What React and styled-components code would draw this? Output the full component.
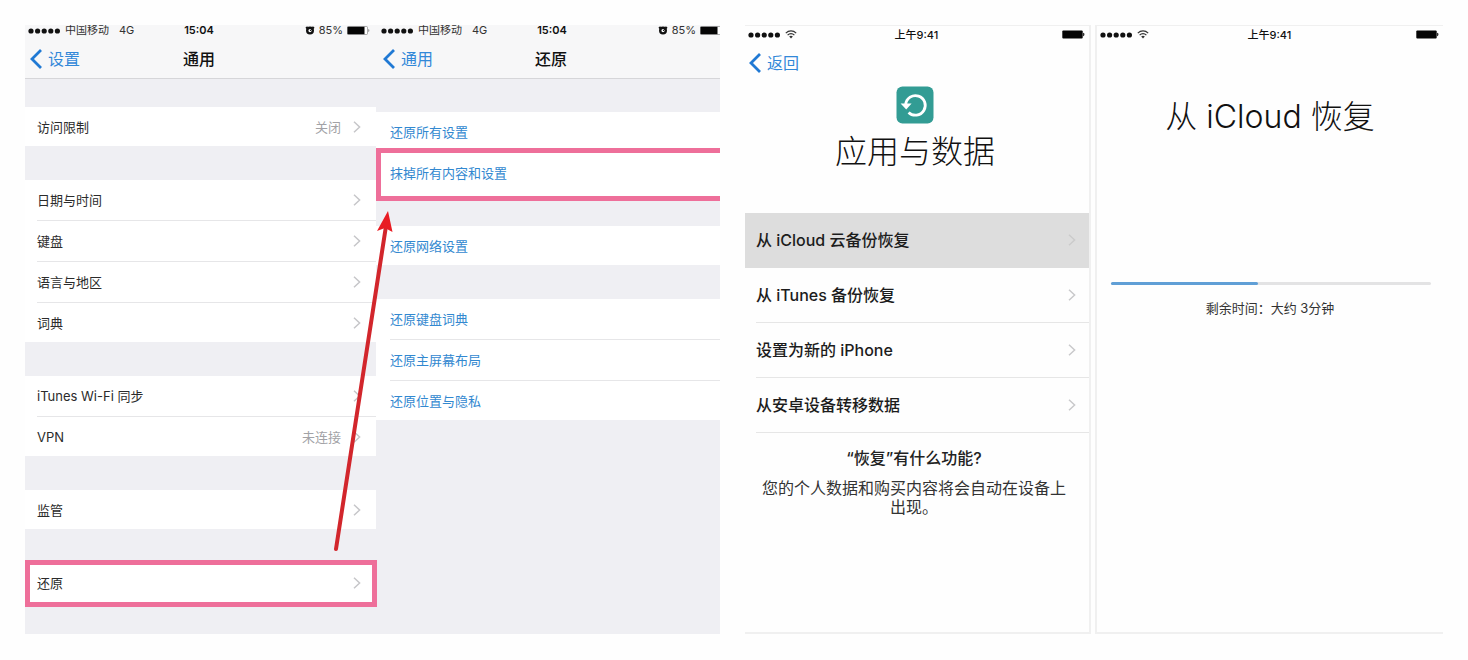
import React, { Fragment } from 'react';
import styled, { createGlobalStyle, css } from 'styled-components';

const GlobalStyle = createGlobalStyle`
    * {
        box-sizing: border-box;
    }
    body {
        margin: 0;
        background-color: #fefefe;
        color: #222;
        font-family: Inter, "Noto Sans CJK SC", sans-serif;
        font-size: 13px;
    }
    button {
        border: 0;
        padding: 0;
        background: none;
        color: inherit;
        font: inherit;
        text-align: left;
        cursor: pointer;
    }
    svg {
        display: block;
        flex: none;
    }
    h1, h2, p {
        margin: 0;
    }
`;

const Page = styled.main`
    display: grid;
    grid-template-columns: 695fr 698fr;
    gap: 25px;
    min-height: 100vh;
    padding: 25px 25px 26px;
`;

const Board = styled.section`
    position: relative;
    display: flex;
    gap: ${props => props.$gap || 0};
    overflow: hidden;
`;

/* iOS settings screens */

const SettingsPhone = styled.article`
    --shift: ${props => props.$shift || '0px'};
    flex: 0 0 calc(100% * 351 / 695);
    background-color: #efeff3;
`;

const SettingsHeader = styled.header`
    border-bottom: 1px solid #d6d6d9;
    background-color: #f7f7f8;
`;

const Bar = styled.div`
    display: grid;
    grid-template-columns: 1fr auto 1fr;
    align-items: center;
`;

const SettingsStatus = styled(Bar)`
    padding-left: calc(3px + var(--shift));
    padding-right: calc(6px - var(--shift));
    font-size: 11px;
    line-height: 11px;
    color: #333;
`;

const StatusGroup = styled.div`
    display: flex;
    align-items: center;
    gap: 4px;
    justify-content: ${props => props.$end ? 'flex-end' : 'flex-start'};
`;

const Carrier = styled.span`
    margin-right: 6px;
`;

const Clock = styled.time`
    font-size: 11px;
    font-weight: ${props => props.$bold ? 600 : 500};
    color: #111;
`;

const SettingsNav = styled(Bar)`
    height: 42px;
    padding: 4px 8px 0 calc(5px + var(--shift));
`;

const BackButton = styled.button`
    display: flex;
    align-items: center;
    gap: 6px;
    justify-self: start;
    color: #3288d8;
    font-size: 16px;
    line-height: 24px;
`;

const NavTitle = styled.h1`
    font-size: 16px;
    line-height: 24px;
    font-weight: 500;
    color: #111;
`;

const Groups = styled.div`
    display: flex;
    flex-direction: column;
    gap: 34px;
    padding-top: ${props => props.$top};
`;

const Group = styled.div`
    background-color: #fff;
`;

const highlight = css`
    z-index: 1;
    &::after {
        content: "";
        position: absolute;
        z-index: -1;
        inset: ${props => props.$mark};
        border: 5px solid #ee6f9a;
        background-color: #fff;
    }
`;

const Row = styled.button`
    position: relative;
    display: block;
    width: 100%;
    padding-left: calc(12px + var(--shift));
    color: ${props => props.$link ? '#3288d0' : '#2b2b2b'};
    ${props => props.$mark && highlight}
`;

const RowInner = styled.span`
    display: flex;
    align-items: center;
    gap: 12px;
    height: 41px;
    padding-right: 15px;
    border-bottom: 1px solid #e6e6e8;
    line-height: 20px;
    ${Row}:last-child > & {
        height: 39px;
        border-bottom: 0;
    }
`;

const RowLabel = styled.span`
    flex: 1;
`;

const RowValue = styled.span`
    color: #a2a2a6;
`;

const Arrow = styled.svg`
    position: absolute;
    z-index: 2;
    top: 185px;
    left: calc(100% * 305 / 695);
`;

/* setup assistant screens */

const SetupPhone = styled.article`
    flex: ${props => props.$grow} 1 0;
    border: solid #f0f0f0;
    border-width: ${props => props.$edges};
    background-color: #fefefe;
`;

const SetupStatus = styled(Bar)`
    height: 17px;
    padding: 0 4px 0 3px;
    line-height: 16px;
`;

const SetupNav = styled.nav`
    padding: 8px 4px 0;
`;

const Hero = styled.header`
    display: flex;
    flex-direction: column;
    align-items: center;
    gap: 4px;
    padding: 11px 4px 37px 0;
`;

const HeroTitle = styled.h1`
    padding-top: ${props => props.$top || 0};
    font-size: 32px;
    line-height: 48px;
    font-weight: 300;
    text-align: center;
    color: #111;
`;

const Option = styled.button`
    display: block;
    width: 100%;
    padding-left: 11px;
    background-color: ${props => props.$active ? '#dddddd' : 'transparent'};
    color: #1c1c1c;
`;

const OptionInner = styled.span`
    display: flex;
    align-items: center;
    justify-content: space-between;
    height: 55px;
    padding-right: 13px;
    border-bottom: 1px solid ${props => props.$active ? '#dddddd' : '#e6e6e6'};
    font-size: 16px;
    line-height: 24px;
    font-weight: 500;
`;

const Help = styled.section`
    padding: 13px 20px 0 14px;
    text-align: center;
`;

const HelpTitle = styled.h2`
    font-size: 16px;
    line-height: 24px;
    font-weight: 500;
`;

const HelpText = styled.p`
    padding-top: 9px;
    font-size: 16px;
    line-height: 19px;
    color: #333;
`;

const Progress = styled.progress`
    display: block;
    width: calc(100% - 26px);
    height: 3px;
    margin: 141px 12px 13px 14px;
    border: 0;
    appearance: none;
    &::-webkit-progress-bar {
        border-radius: 2px;
        background-color: #e3e3e4;
    }
    &::-webkit-progress-value {
        border-radius: 2px;
        background-color: #609fd6;
    }
`;

const Remaining = styled.label`
    display: block;
    text-align: center;
    line-height: 20px;
    color: #333;
`;

const Signal = () => (
    <svg width="33" height="6" viewBox="0 0 33 6" fill="#111">
        {[0, 1, 2, 3, 4].map(item => <circle key={item} cx={3 + item * 6.6} cy="3" r="2.6" />)}
    </svg>
);

const Wifi = () => (
    <svg width="12" height="9" viewBox="0 0 12 9" fill="none" stroke="#333" strokeWidth="1.2">
        <path d="M0.8 3.2C3.8 0.2 8.2 0.2 11.2 3.2" />
        <path d="M2.6 5.1C4.6 3.1 7.4 3.1 9.4 5.1" />
        <path d="M4.2 6.4C5.2 5.4 6.8 5.4 7.8 6.4L6 8.4Z" fill="#333" stroke="none" />
    </svg>
);

const Alarm = () => (
    <svg width="10" height="9" viewBox="0 0 10 9">
        <path d="M1 2.4L2.6 0.8M9 2.4L7.4 0.8" stroke="#111" strokeWidth="1.6" />
        <circle cx="5" cy="4.6" r="2.8" fill="#fff" stroke="#111" strokeWidth="2.4" />
        <path d="M5 5L6.8 3" stroke="#111" strokeWidth="1" />
    </svg>
);

const Battery = () => (
    <svg width="23" height="9" viewBox="0 0 23 9">
        <rect x="0.5" y="0.5" width="20" height="8" rx="1" fill="#fff" stroke="#777" strokeWidth="0.6" />
        <rect x="0.5" y="0.8" width="17" height="7.4" fill="#050505" />
        <path d="M21.4 3V6C22.6 5.8 22.6 3.2 21.4 3Z" fill="#777" />
    </svg>
);

const BatteryFull = () => (
    <svg width="23" height="9" viewBox="0 0 23 9" fill="#050505">
        <rect x="0.3" y="0.4" width="20.4" height="8.2" rx="1" />
        <path d="M21.2 2.8V6.2C22.8 6 22.8 3 21.2 2.8Z" />
    </svg>
);

const BackIcon = () => (
    <svg width="12" height="20" viewBox="0 0 12 20" fill="none" stroke="#2079d4" strokeWidth="2.8">
        <path d="M11 1L2 10L11 19" />
    </svg>
);

const Chevron = ({ color = '#c6c6c9' }) => (
    <svg width="8" height="12" viewBox="0 0 8 12" fill="none" stroke={color} strokeWidth="1.5">
        <path d="M1 0.8L6.6 6L1 11.2" />
    </svg>
);

const RestoreIcon = () => (
    <svg width="38" height="38" viewBox="0 0 38 38">
        <rect x="0.5" y="0.5" width="37" height="37" rx="6" fill="#329c94" />
        <path d="M9.7 18.5A9.8 9.8 0 1 1 12.6 26.4" fill="none" stroke="#fff" strokeWidth="2.8" />
        <path d="M4.6 17.4H15.6L10.2 23.4Z" fill="#fff" />
    </svg>
);

const SettingsTop = ({ back, title }) => (
    <SettingsHeader>
        <SettingsStatus>
            <StatusGroup>
                <Signal />
                <Carrier>中国移动</Carrier>
                <span>4G</span>
            </StatusGroup>
            <Clock $bold>15:04</Clock>
            <StatusGroup $end>
                <Alarm />
                <span>85%</span>
                <Battery />
            </StatusGroup>
        </SettingsStatus>
        <SettingsNav>
            <BackButton><BackIcon />{back}</BackButton>
            <NavTitle>{title}</NavTitle>
        </SettingsNav>
    </SettingsHeader>
);

const SettingsList = ({ groups, top, link }) => (
    <Groups $top={top}>
        {groups.map((group, index) => (
            <Group key={index}>
                {group.map(item => (
                    <Row key={item.label} $link={link} $mark={item.mark}>
                        <RowInner>
                            <RowLabel>{item.label}</RowLabel>
                            {item.value && <RowValue>{item.value}</RowValue>}
                            {!link && <Chevron />}
                        </RowInner>
                    </Row>
                ))}
            </Group>
        ))}
    </Groups>
);

const SetupTop = () => (
    <SetupStatus>
        <StatusGroup>
            <Signal />
            <Wifi />
        </StatusGroup>
        <Clock>上午9:41</Clock>
        <StatusGroup $end><BatteryFull /></StatusGroup>
    </SetupStatus>
);

const general = [
    [{ label: '访问限制', value: '关闭' }],
    [{ label: '日期与时间' }, { label: '键盘' }, { label: '语言与地区' }, { label: '词典' }],
    [{ label: 'iTunes Wi-Fi 同步' }, { label: 'VPN', value: '未连接' }],
    [{ label: '监管' }],
    [{ label: '还原', mark: '-3px -1px -5px 0' }],
];

const reset = [
    [{ label: '还原所有设置' }, { label: '抹掉所有内容和设置', mark: '-5px 0 -9px 0' }],
    [{ label: '还原网络设置' }],
    [{ label: '还原键盘词典' }, { label: '还原主屏幕布局' }, { label: '还原位置与隐私' }],
];

const options = ['从 iCloud 云备份恢复', '从 iTunes 备份恢复', '设置为新的 iPhone', '从安卓设备转移数据'];

const App = () => {
    return (
        <Fragment>
            <GlobalStyle />
            <Page lang="zh-CN">
                <Board>
                    <SettingsPhone>
                        <SettingsTop back="设置" title="通用" />
                        <SettingsList groups={general} top="28px" />
                    </SettingsPhone>
                    <SettingsPhone $shift="2px">
                        <SettingsTop back="通用" title="还原" />
                        <SettingsList groups={reset} top="33px" link />
                    </SettingsPhone>
                    <Arrow width="75" height="345" viewBox="0 0 75 345">
                        <path d="M6 339L56 16" stroke="#d2262c" strokeWidth="4" strokeLinecap="round" />
                        <path d="M58 1L62.5 22L55 18L47 21Z" fill="#e81c23" />
                    </Arrow>
                </Board>
                <Board $gap="4px">
                    <SetupPhone $grow={346} $edges="1px 2px 2px 0">
                        <SetupTop />
                        <SetupNav>
                            <BackButton><BackIcon />返回</BackButton>
                        </SetupNav>
                        <Hero>
                            <RestoreIcon />
                            <HeroTitle>应用与数据</HeroTitle>
                        </Hero>
                        {options.map((item, index) => (
                            <Option key={item} $active={index === 0}>
                                <OptionInner $active={index === 0}>
                                    {item}
                                    <Chevron color={index === 0 ? '#cbcbcb' : '#c9c9cb'} />
                                </OptionInner>
                            </Option>
                        ))}
                        <Help>
                            <HelpTitle>“恢复”有什么功能?</HelpTitle>
                            <HelpText>您的个人数据和购买内容将会自动在设备上出现。</HelpText>
                        </Help>
                    </SetupPhone>
                    <SetupPhone $grow={348} $edges="1px 0 2px 2px">
                        <SetupTop />
                        <HeroTitle $top="50px">从 iCloud 恢复</HeroTitle>
                        <Progress id="restore" max="100" value="46" />
                        <Remaining htmlFor="restore">剩余时间：大约 3分钟</Remaining>
                    </SetupPhone>
                </Board>
            </Page>
        </Fragment>
    );
}

export default App;
